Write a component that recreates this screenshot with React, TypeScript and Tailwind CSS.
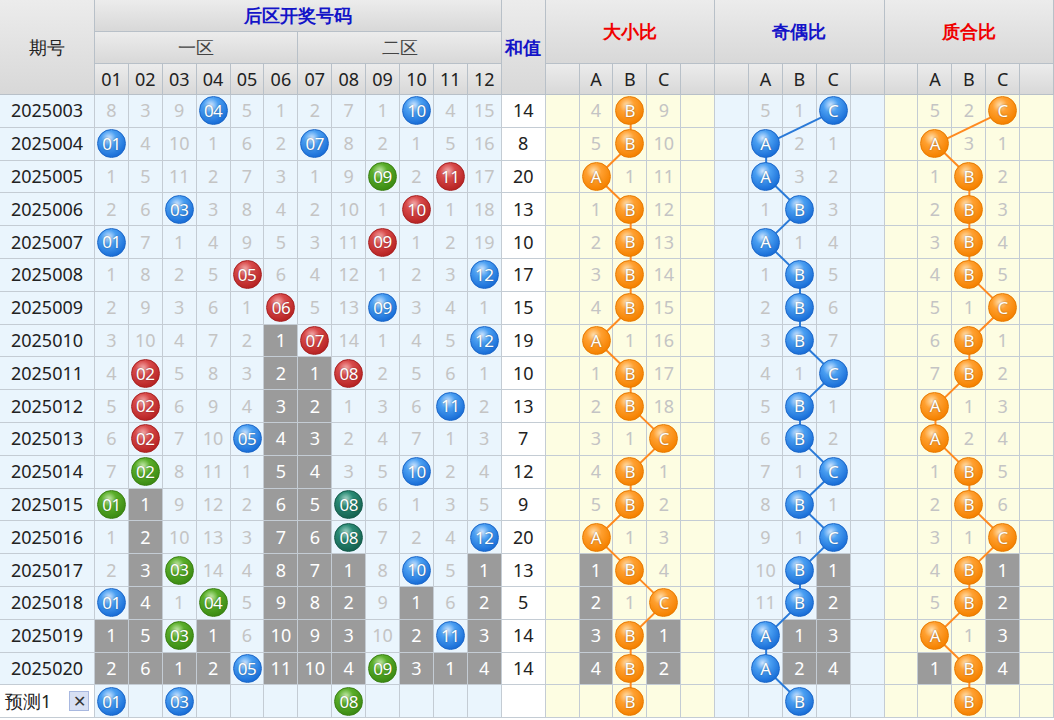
import React from "react";

type C = string;
// number rows: token forms: "8" light, "*4" gray bg, "b04" ball blue, r red, g green, t teal
const rows: { p: string; n: C[]; s: string; dx: C[]; jo: C[]; zh: C[] }[] = [
  { p: "2025003", n: ["8","3","9","b04","5","1","2","7","1","b10","4","15"], s: "14", dx: ["4","oB","9"], jo: ["5","1","bC"], zh: ["5","2","oC"] },
  { p: "2025004", n: ["b01","4","10","1","6","2","b07","8","2","1","5","16"], s: "8", dx: ["5","oB","10"], jo: ["bA","2","1"], zh: ["oA","3","1"] },
  { p: "2025005", n: ["1","5","11","2","7","3","1","9","g09","2","r11","17"], s: "20", dx: ["oA","1","11"], jo: ["bA","3","2"], zh: ["1","oB","2"] },
  { p: "2025006", n: ["2","6","b03","3","8","4","2","10","1","r10","1","18"], s: "13", dx: ["1","oB","12"], jo: ["1","bB","3"], zh: ["2","oB","3"] },
  { p: "2025007", n: ["b01","7","1","4","9","5","3","11","r09","1","2","19"], s: "10", dx: ["2","oB","13"], jo: ["bA","1","4"], zh: ["3","oB","4"] },
  { p: "2025008", n: ["1","8","2","5","r05","6","4","12","1","2","3","b12"], s: "17", dx: ["3","oB","14"], jo: ["1","bB","5"], zh: ["4","oB","5"] },
  { p: "2025009", n: ["2","9","3","6","1","r06","5","13","b09","3","4","1"], s: "15", dx: ["4","oB","15"], jo: ["2","bB","6"], zh: ["5","1","oC"] },
  { p: "2025010", n: ["3","10","4","7","2","*1","r07","14","1","4","5","b12"], s: "19", dx: ["oA","1","16"], jo: ["3","bB","7"], zh: ["6","oB","1"] },
  { p: "2025011", n: ["4","r02","5","8","3","*2","*1","r08","2","5","6","1"], s: "10", dx: ["1","oB","17"], jo: ["4","1","bC"], zh: ["7","oB","2"] },
  { p: "2025012", n: ["5","r02","6","9","4","*3","*2","1","3","6","b11","2"], s: "13", dx: ["2","oB","18"], jo: ["5","bB","1"], zh: ["oA","1","3"] },
  { p: "2025013", n: ["6","r02","7","10","b05","*4","*3","2","4","7","1","3"], s: "7", dx: ["3","1","oC"], jo: ["6","bB","2"], zh: ["oA","2","4"] },
  { p: "2025014", n: ["7","g02","8","11","1","*5","*4","3","5","b10","2","4"], s: "12", dx: ["4","oB","1"], jo: ["7","1","bC"], zh: ["1","oB","5"] },
  { p: "2025015", n: ["g01","*1","9","12","2","*6","*5","t08","6","1","3","5"], s: "9", dx: ["5","oB","2"], jo: ["8","bB","1"], zh: ["2","oB","6"] },
  { p: "2025016", n: ["1","*2","10","13","3","*7","*6","t08","7","2","4","b12"], s: "20", dx: ["oA","1","3"], jo: ["9","1","bC"], zh: ["3","1","oC"] },
  { p: "2025017", n: ["2","*3","g03","14","4","*8","*7","*1","8","b10","5","*1"], s: "13", dx: ["*1","oB","4"], jo: ["10","bB","*1"], zh: ["4","oB","*1"] },
  { p: "2025018", n: ["b01","*4","1","g04","5","*9","*8","*2","9","*1","6","*2"], s: "5", dx: ["*2","1","oC"], jo: ["11","bB","*2"], zh: ["5","oB","*2"] },
  { p: "2025019", n: ["*1","*5","g03","*1","6","*10","*9","*3","10","*2","b11","*3"], s: "14", dx: ["*3","oB","*1"], jo: ["bA","*1","*3"], zh: ["oA","1","*3"] },
  { p: "2025020", n: ["*2","*6","*1","*2","b05","*11","*10","*4","g09","*3","*1","*4"], s: "14", dx: ["*4","oB","*2"], jo: ["bA","*2","*4"], zh: ["*1","oB","*4"] },
];
const pred = { n: ["b01","","b03","","","","","g08","","","",""], dx: ["","oB",""], jo: ["","bB",""], zh: ["","oB",""] };

const ballCls: Record<string, string> = {
  b: "bg-[radial-gradient(circle_at_40%_30%,#cfe6ff_0%,#4a9ff2_30%,#1a6fd8_75%,#1258b8_100%)] border border-[#1a66c8]",
  r: "bg-[radial-gradient(circle_at_40%_30%,#f4b0b0_0%,#d84a4a_30%,#b82424_75%,#981818_100%)] border border-[#a82020]",
  g: "bg-[radial-gradient(circle_at_40%_30%,#c8ecb0_0%,#5aae2a_30%,#3c8c14_75%,#2c700c_100%)] border border-[#3a8012]",
  t: "bg-[radial-gradient(circle_at_40%_30%,#a8d8cc_0%,#2a8a74_30%,#166452_75%,#0e4e40_100%)] border border-[#145a4a]",
  o: "bg-[radial-gradient(circle_at_40%_30%,#ffe0b0_0%,#ffa030_30%,#f58200_75%,#e07000_100%)] border border-[#e87a00]",
};

function Cell({ v, bg }: { v: string; bg: string }) {
  const base = "flex items-center justify-center border-r border-b border-[#c4ccd4] text-[18px]";
  if (!v) return <div className={`${base} ${bg}`} />;
  if (v[0] === "*")
    return <div className={`${base} bg-[#9b9b9b] text-white`}>{v.slice(1)}</div>;
  const k = v[0];
  if (ballCls[k])
    return (
      <div className={`${base} ${bg}`}>
        <div className={`relative z-10 flex h-[29px] w-[29px] items-center justify-center rounded-full text-white text-[17px] tracking-[-0.5px] [text-shadow:0_0_2px_rgba(0,0,0,0.4)] ${ballCls[k]}`}>
          {v.slice(1)}
        </div>
      </div>
    );
  return <div className={`${base} ${bg} text-[#c4c4c4]`}>{v}</div>;
}

const H = "flex items-center justify-center border-r border-b border-[#b8c0c8] bg-[linear-gradient(#ececec,#d8d8d8)] text-[18px] text-[#222]";
const TOP = 95, RH = 32.8;
const GW = (1054 - 546) / 15;

function lines(key: "dx" | "jo" | "zh", g: number, color: string) {
  const all = [...rows.map((r) => r[key]), pred[key]];
  const pts = all.map((a, i) => {
    const j = a.findIndex((x) => /^[ob]/.test(x));
    return [546 + g * 5 * GW + GW * (1.5 + j), TOP + RH * (i + 0.5)];
  });
  return pts.slice(1).map((p, i) => (
    <line key={key + i} x1={pts[i][0]} y1={pts[i][1]} x2={p[0]} y2={p[1]} stroke={color} strokeWidth={2} />
  ));
}

export default function App() {
  const nb = "bg-[#eaf5fd]";
  const yb = "bg-[#fdfde2]";
  const cells: React.ReactNode[] = [];
  const grp = (arr: string[], bg: string, k: string) => {
    cells.push(<Cell key={k + "a"} v="" bg={bg} />);
    arr.forEach((v, i) => cells.push(<Cell key={k + i} v={v} bg={bg} />));
    cells.push(<Cell key={k + "z"} v="" bg={bg} />);
  };
  rows.forEach((r, ri) => {
    cells.push(<div key={"p" + ri} className={`flex items-center justify-center border-r border-b border-[#c4ccd4] ${nb} text-[18px] text-[#222]`}>{r.p}</div>);
    r.n.forEach((v, i) => cells.push(<Cell key={`n${ri}-${i}`} v={v} bg={nb} />));
    cells.push(<div key={"s" + ri} className="flex items-center justify-center border-r border-b border-[#c4ccd4] bg-white text-[18px] text-[#222]">{r.s}</div>);
    grp(r.dx, yb, `dx${ri}`);
    grp(r.jo, nb, `jo${ri}`);
    grp(r.zh, yb, `zh${ri}`);
  });
  cells.push(
    <div key="pp" className="flex items-center justify-between border-r border-b border-[#c4ccd4] bg-white pl-[5px] pr-[5px] text-[18px] text-[#222]">
      <span>预测1</span>
      <span className="flex h-[20px] w-[20px] items-center justify-center border border-[#a8b8e0] bg-[#d8e0f4] text-[16px] leading-none text-[#333]">✕</span>
    </div>
  );
  pred.n.forEach((v, i) => cells.push(<Cell key={"pn" + i} v={v} bg={nb} />));
  cells.push(<Cell key="ps" v="" bg="bg-white" />);
  grp(pred.dx, yb, "pdx");
  grp(pred.jo, nb, "pjo");
  grp(pred.zh, yb, "pzh");

  return (
    <div className="relative h-[720px] w-[1054px] overflow-hidden bg-white font-['Noto_Sans','Noto_Sans_CJK_SC',sans-serif]">
      <div className="grid w-[1054px] grid-cols-[95px_repeat(12,33.9px)_44px_repeat(15,1fr)] grid-rows-[32px_32px_31px_repeat(18,32.8px)_33px]">
        <div className={`${H} row-span-3`}>期号</div>
        <div className={`${H} col-span-12 font-bold text-[#1414c8]`}>后区开奖号码</div>
        <div className={`${H} row-span-3 font-bold text-[#1414c8]`}>和值</div>
        <div className={`${H} col-span-5 row-span-2 font-bold text-[#f00000]`}>大小比</div>
        <div className={`${H} col-span-5 row-span-2 font-bold text-[#1414c8]`}>奇偶比</div>
        <div className={`${H} col-span-5 row-span-2 font-bold text-[#f00000]`}>质合比</div>
        <div className={`${H} col-span-6 text-[#444]`}>一区</div>
        <div className={`${H} col-span-6 text-[#444]`}>二区</div>
        {["01","02","03","04","05","06","07","08","09","10","11","12"].map((x) => (
          <div key={x} className={H}>{x}</div>
        ))}
        {[0, 1, 2].map((g) =>
          ["", "A", "B", "C", ""].map((x, i) => <div key={`h${g}${i}`} className={H}>{x}</div>)
        )}
        {cells}
      </div>
      <svg className="pointer-events-none absolute left-0 top-0 z-[5]" width={1054} height={720}>
        {lines("dx", 0, "#ff8a20")}
        {lines("jo", 1, "#2a7ad8")}
        {lines("zh", 2, "#ff8a20")}
      </svg>
    </div>
  );
}
